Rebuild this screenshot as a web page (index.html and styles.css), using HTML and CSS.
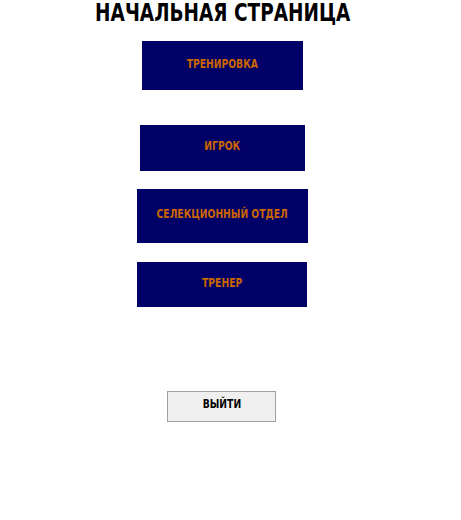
FILE: index.html
```html
<!DOCTYPE html>
<html lang="ru">
<head>
<meta charset="utf-8">
<title>Начальная страница</title>
<link rel="stylesheet" href="styles.css">
</head>
<body>
<main class="page">
  <h1 class="title"><span class="narrow">НАЧАЛЬНАЯ СТРАНИЦА</span></h1>
  <button class="nav nav-training"><span class="narrow">ТРЕНИРОВКА</span></button>
  <button class="nav nav-player"><span class="narrow">ИГРОК</span></button>
  <button class="nav nav-selection"><span class="narrow">СЕЛЕКЦИОННЫЙ ОТДЕЛ</span></button>
  <button class="nav nav-coach"><span class="narrow">ТРЕНЕР</span></button>
  <button class="exit"><span class="narrow">ВЫЙТИ</span></button>
</main>
</body>
</html>
```
FILE: styles.css
```css
html, body {
  margin: 0;
  padding: 0;
  background: #ffffff;
}
.page {
  width: 445px;
  display: flex;
  flex-direction: column;
  align-items: center;
  font-family: "DejaVu Sans", sans-serif;
}
.narrow {
  display: inline-block;
  transform: scaleX(0.77);
  white-space: nowrap;
}
.title {
  margin: 0;
  height: 41px;
  font-size: 24px;
  line-height: 26px;
  font-weight: bold;
  color: #000;
}
.nav {
  border: none;
  background: #000066;
  color: #cc6600;
  font-family: inherit;
  font-weight: bold;
  font-size: 12px;
  line-height: 14px;
  padding: 0 0 4px 0;
}
.nav-training { width: 161px; height: 49px; }
.nav-player { width: 165px; height: 46px; margin-top: 35px; }
.nav-selection { width: 171px; height: 54px; margin-top: 18px; }
.nav-coach { width: 170px; height: 45px; margin-top: 19px; margin-right: 1px; }
.exit {
  margin-top: 84px;
  margin-right: 2px;
  width: 109px;
  height: 31px;
  background: #f0f0f0;
  border: 1px solid #a0a0a0;
  font-family: inherit;
  font-weight: bold;
  font-size: 12px;
  line-height: 14px;
  color: #000;
  padding: 0 0 5px 0;
}
```
